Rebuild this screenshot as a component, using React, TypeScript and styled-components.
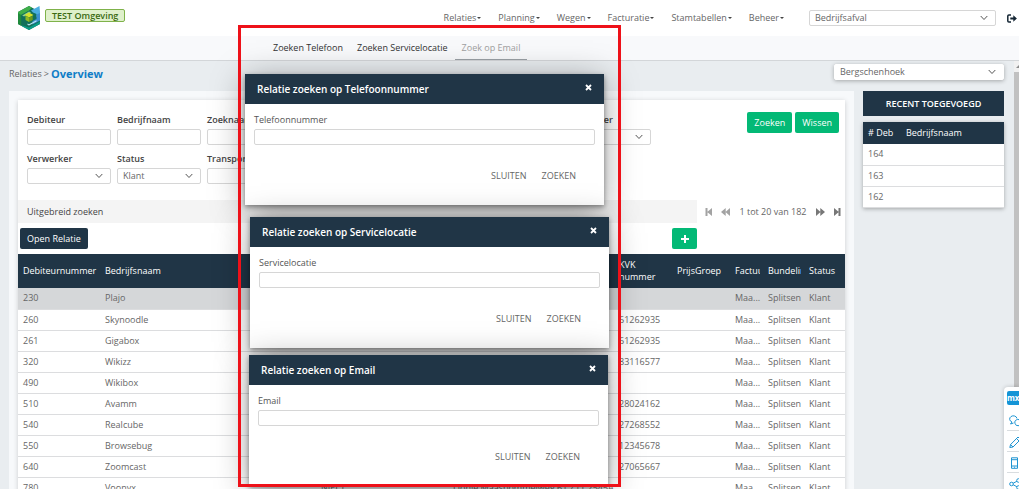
import React, { useId } from "react";
import styled, { createGlobalStyle } from "styled-components";

const navy = "#203546";
const green = "#03b976";
const line = "#dcdddf";

const GlobalStyle = createGlobalStyle`
  * { box-sizing: border-box; }
  body {
    margin: 0;
    overflow: hidden;
    background: #e9edf0;
    color: #666;
    font: 9px/12px "Open Sans", "Noto Sans", sans-serif;
  }
  button, input, select { font: inherit; color: inherit; margin: 0; }
  button { border: 0; padding: 0; background: none; cursor: pointer; }
  a { color: inherit; text-decoration: none; }
  svg { display: block; flex: none; }
`;

const Page = styled.div`
  position: relative;
  display: flex;
  flex-direction: column;
  height: 100vh;
  overflow: hidden;
`;

const TopBar = styled.header`
  display: flex;
  flex: none;
  align-items: center;
  height: 36px;
  padding: 0 2px 0 18px;
  background: #fff;
`;

const EnvBadge = styled.span`
  align-self: flex-start;
  margin: 9px 0 0 5px;
  padding: 0 6px;
  border: 1px solid #7fb24a;
  border-radius: 2px;
  background: #dff0cb;
  color: #3b6a12;
  font-weight: 600;
  line-height: 11px;
`;

const MainNav = styled.nav`
  display: flex;
  gap: 17px;
  margin: 0 25px 0 auto;
`;

const NavLink = styled.a`
  display: flex;
  align-items: center;
  gap: 1px;
  &::after {
    content: "";
    border: 2px solid transparent;
    border-top-color: #444;
    border-bottom: 0;
  }
`;

const IconButton = styled.button`
  display: grid;
  place-items: center;
  color: #555;
`;

const LogoutButton = styled(IconButton)`
  margin-left: 11px;
`;

const SubBar = styled.nav`
  display: flex;
  flex: none;
  height: 25px;
  padding-left: 266px;
  border-bottom: 1px solid #d3d6d9;
  background: #f8f9fb;
`;

const SubLink = styled.a<{ $active?: boolean }>`
  padding: 6px 7px 0;
  border-bottom: 1px solid ${(p) => (p.$active ? "#9aa0a6" : "transparent")};
  color: ${(p) => (p.$active ? "#a0a0a0" : "#333")};
`;

const Body = styled.div`
  display: flex;
  flex: 1;
  min-height: 0;
`;

const Main = styled.main`
  flex: 1;
  min-width: 0;
  padding: 3px 10px 0 9px;
`;

const Heading = styled.div`
  display: flex;
  justify-content: space-between;
  height: 27px;
`;

const Crumbs = styled.div`
  display: flex;
  align-items: center;
  gap: 2px;
  height: 20px;
`;

const Title = styled.h1`
  margin: 0;
  color: #0f7dc7;
  font-size: 11px;
  font-weight: 700;
`;

const SelectBox = styled.span<{ $width?: number; $raised?: boolean }>`
  display: grid;
  flex: none;
  align-items: center;
  width: ${(p) => (p.$width ? `${p.$width}px` : "100%")};
  height: 16px;
  border: 1px solid ${(p) => (p.$raised ? "#fff" : "#d6d6d6")};
  border-radius: 2px;
  background: #fff;
  box-shadow: ${(p) => (p.$raised ? "0 1px 4px rgba(0,0,0,.3)" : "none")};
  select {
    grid-area: 1 / 1;
    width: 100%;
    height: 14px;
    padding: 0 14px 0 5px;
    border: 0;
    background: none;
    appearance: none;
    line-height: 12px;
  }
  svg {
    grid-area: 1 / 1;
    justify-self: end;
    margin-right: 7px;
    pointer-events: none;
  }
`;

const Columns = styled.div`
  display: flex;
  gap: 9px;
`;

const Panel = styled.section`
  flex: 1;
  min-width: 0;
  padding: 9px 9px 0;
  background: #f7f9fb;
`;

const Card = styled.div`
  background: #fff;
  box-shadow: 0 1px 5px rgba(0, 0, 0, 0.18);
`;

const FilterArea = styled.form`
  display: flex;
  justify-content: space-between;
  height: 100px;
  padding: 14px 6px 0 9px;
`;

const FilterGrid = styled.div`
  display: grid;
  grid-template-columns: repeat(7, 84px);
  gap: 8px 6px;
  align-content: start;
`;

const Field = styled.div`
  display: flex;
  flex-direction: column;
  gap: 3px;
  label { color: #444; font-weight: 600; }
`;

const TextInput = styled.input`
  width: 100%;
  height: 16px;
  padding: 0 5px;
  border: 1px solid #d6d6d6;
  border-radius: 2px;
  background: #fff;
`;

const ButtonRow = styled.div`
  display: flex;
  align-items: flex-start;
  gap: 3px;
  margin-top: -2px;
`;

const Button = styled.button<{ $tone?: "navy" | "green" }>`
  display: grid;
  place-items: center;
  min-width: 25px;
  height: 21px;
  padding: 0 7px;
  border-radius: 2px;
  background: ${(p) => (p.$tone === "navy" ? navy : green)};
  color: #fff;
`;

const ExtraRow = styled.div`
  display: flex;
  height: 23px;
`;

const ExtraToggle = styled.button`
  flex: 1;
  padding: 0 9px;
  background: #f4f4f4;
  color: #444;
  text-align: left;
`;

const Pager = styled.div`
  display: flex;
  align-items: center;
  justify-content: space-between;
  width: 148px;
  padding: 0 4px 0 8px;
`;

const Actions = styled.div`
  display: flex;
  align-items: center;
  justify-content: space-between;
  height: 31px;
  padding: 0 148px 0 2px;
`;

const Table = styled.table`
  width: 100%;
  border-collapse: collapse;
  table-layout: fixed;
  th, td { padding: 0 3px 0 5px; text-align: left; white-space: nowrap; }
  th {
    height: 34px;
    background: ${navy};
    color: #fff;
    font-weight: 500;
  }
  td { height: 21px; border-bottom: 1px solid ${line}; }
`;

const Row = styled.tr<{ $selected?: boolean }>`
  background: ${(p) => (p.$selected ? "#d5d7d9" : "#fff")};
`;

const HeadText = styled.span`
  display: block;
  overflow: hidden;
  white-space: pre-line;
`;

const Side = styled.aside`
  width: 141px;
`;

const SideTitle = styled.h2`
  margin: 0 0 6px;
  background: ${navy};
  color: #fff;
  font-size: 9px;
  font-weight: 600;
  line-height: 25px;
  text-align: center;
`;

const RecentTable = styled(Table)`
  box-shadow: 0 1px 4px rgba(0, 0, 0, 0.3);
  th { height: 22px; }
  tr { background: #fff; }
`;

const ScrollTrack = styled.div`
  display: flex;
  flex-direction: column;
  width: 5px;
  overflow: hidden;
  background: #f1f1f1;
  &::before {
    content: "";
    width: 0;
    margin: 4px 0 4px 2px;
    border: 3px solid transparent;
    border-top: 0;
    border-bottom-color: #8a8a8a;
  }
  &::after { content: ""; flex: 1; background: #c1c1c1; }
`;

const Dialog = styled.section<{ $x: number; $y: number }>`
  position: absolute;
  left: ${(p) => p.$x}px;
  top: ${(p) => p.$y}px;
  width: 359px;
  background: #fff;
  box-shadow: 0 5px 32px rgba(0, 0, 0, 0.36), 0 2px 5px rgba(0, 0, 0, 0.4);
`;

const DialogHead = styled.header`
  display: flex;
  justify-content: space-between;
  height: 30px;
  padding: 9px 12px 0;
  background: ${navy};
  color: #fff;
  h2 { margin: 0; font-size: 10px; line-height: 12px; font-weight: 600; }
  button { height: 9px; color: #fff; }
`;

const DialogBody = styled.div`
  padding: 10px 9px 0;
  label { font-weight: 500; color: #555; }
`;

const DialogActions = styled.footer`
  display: flex;
  justify-content: flex-end;
  gap: 15px;
  padding: 25px 28px 23px;
`;

const Highlight = styled.div`
  position: absolute;
  left: 238px;
  top: 25px;
  width: 383px;
  height: 462px;
  border: 3px solid #ee1119;
  pointer-events: none;
`;

const Dock = styled.aside`
  position: absolute;
  right: 0;
  top: 387px;
  width: 15px;
  padding: 4px 0 0 3px;
  border-radius: 4px 0 0 4px;
  overflow: hidden;
  background: #fff;
  box-shadow: 0 0 4px rgba(0, 0, 0, 0.2);
`;

const DockLogo = styled.div`
  width: 18px;
  height: 14px;
  margin-bottom: 5px;
  border-radius: 2px;
  background: #1494d6;
  color: #fff;
  font-size: 8px;
  font-weight: 700;
  line-height: 13px;
`;

const DockItem = styled.button`
  display: block;
  width: 18px;
  height: 21px;
  padding: 3px 0 0 2px;
  border-bottom: 1px solid #d9dde0;
`;

const Chevron = () => (
  <svg width="8" height="6" viewBox="0 0 8 6" fill="none" stroke="#555">
    <path d="M.7 1 4 4.500 7.300 1" />
  </svg>
);

function Select({ label, id, value, width, raised }: { label?: string; id?: string; value?: string; width?: number; raised?: boolean }) {
  return (
    <SelectBox $width={width} $raised={raised}>
      <select id={id} aria-label={label}>
        <option>{value ?? ""}</option>
      </select>
      <Chevron />
    </SelectBox>
  );
}

function FilterField({ label, kind, value }: { label: string; kind?: "select"; value?: string }) {
  const id = useId();
  return (
    <Field>
      <label htmlFor={id}>{label}</label>
      {kind === "select" ? <Select id={id} value={value} /> : <TextInput id={id} />}
    </Field>
  );
}

const Logo = () => (
  <svg width="22" height="24" viewBox="0 0 22 24">
    <path d="M11 0 0 6v12l11 6 11-6V6z" fill="#12705a" />
    <path d="M11 0 0 6v2.500l2 1 9-5 3-2.800z" fill="#3fae49" />
    <path d="M0 7v11l3.200 1.800V9z" fill="#1f8a3c" />
    <path d="M4.200 9.500 11 5.500l2 1-7 4z" fill="#8fd08a" />
    <path d="M13 4.500 21.500 0 22 6v3l-3.500 2V8L15 6.500z" fill="#4aaee0" />
    <path d="M18.500 8.500 22 7v7.500l-7.500 4v-3.500l4-2z" fill="#3b8fd0" />
    <path d="M4.500 19.500 11 21.500l11-6V18l-11 6-7-3.800z" fill="#0a9c88" />
    <path d="m11 6.500 4.500 2.500-4.500 2.500L6.500 9z" fill="#d5e02c" />
    <path d="M7.500 9.700 11 11.500v4.400l-3.500-2z" fill="#8fb923" />
    <path d="M14.700 9.700v4.200L11 15.900v-4.400z" fill="#6a9a1e" />
    <path d="M9.500 17.500 11 18.300l7.500-4v1.200l-7.500 4-1.500-.8z" fill="#bfe6f2" />
  </svg>
);

const LogoutIcon = () => (
  <svg width="10" height="9" viewBox="0 0 10 9">
    <path d="M4 1H1.900Q.8 1 .8 2v5q0 1 1.100 1H4" fill="none" stroke="#152634" strokeWidth="1.500" />
    <path d="M3.300 3.400h3V1.300L9.900 4.500 6.300 7.700V5.600h-3z" fill="#152634" />
  </svg>
);

const CloseIcon = () => (
  <svg width="7" height="7" viewBox="0 0 7 7" stroke="#fff" strokeWidth="1.800">
    <path d="m1 1 5 5M6 1 1 6" />
  </svg>
);

const PlusIcon = () => (
  <svg width="8" height="8" viewBox="0 0 8 8" stroke="#fff" strokeWidth="2">
    <path d="M4 0v8M0 4h8" />
  </svg>
);

const StepIcon = ({ end, back }: { end?: boolean; back?: boolean }) => (
  <svg
    width={end ? 7 : 9}
    height="8"
    viewBox={end ? "0 0 7 8" : "0 0 9 8"}
    fill={back ? "#a3a3a3" : "#777"}
    transform={back ? "scale(-1 1)" : undefined}
  >
    {end ? <path d="M0 0 4.800 4 0 8zM4.500 0h2v8h-2z" /> : <path d="M0 0 4.500 4 0 8zM4.300 0 9 4 4.300 8z" />}
  </svg>
);

const DockIcon = ({ children }: { children: React.ReactNode }) => (
  <svg width="13" height="13" viewBox="0 0 13 13" fill="none" stroke="#1e94d2" strokeWidth="1">
    {children}
  </svg>
);

const columns: [string, number | undefined][] = [
  ["Debiteurnummer", 82],
  ["Bedrijfsnaam", undefined],
  ["Plaats", 132],
  ["Adres", 166],
  ["KVK\nnummer", 58],
  ["PrijsGroep", 58],
  ["Factuur", 33],
  ["Bundeling", 41],
  ["Status", 41],
];

const relations = [
  ["230", "Plajo", "", "", ""],
  ["260", "Skynoodle", "", "", "61262935"],
  ["261", "Gigabox", "", "", "61262935"],
  ["320", "Wikizz", "", "", "83116577"],
  ["490", "Wikibox", "", "", ""],
  ["510", "Avamm", "", "", "28024162"],
  ["540", "Realcube", "", "", "27268552"],
  ["550", "Browsebug", "", "", "12345678"],
  ["640", "Zoomcast", "", "", "27065667"],
  ["780", "Voonyx", "NIEL1", "Lionle Maasbommelweg 61 Z11 2545A", ""],
];

function SearchDialog({ subject, x, y }: { subject: string; x: number; y: number }) {
  const id = useId();
  return (
    <Dialog $x={x} $y={y} role="dialog" aria-labelledby={`${id}-title`}>
      <DialogHead>
        <h2 id={`${id}-title`}>Relatie zoeken op {subject}</h2>
        <IconButton aria-label="Sluiten"><CloseIcon /></IconButton>
      </DialogHead>
      <DialogBody>
        <Field>
          <label htmlFor={id}>{subject}</label>
          <TextInput id={id} />
        </Field>
      </DialogBody>
      <DialogActions>
        <button>SLUITEN</button>
        <button>ZOEKEN</button>
      </DialogActions>
    </Dialog>
  );
}

export default function App() {
  return (
    <Page>
      <GlobalStyle />
      <TopBar>
        <Logo />
        <EnvBadge>TEST Omgeving</EnvBadge>
        <MainNav>
          {["Relaties", "Planning", "Wegen", "Facturatie", "Stamtabellen", "Beheer"].map((item) => (
            <NavLink href="#" key={item}>{item}</NavLink>
          ))}
        </MainNav>
        <Select label="Afdeling" value="Bedrijfsafval" width={187} />
        <LogoutButton aria-label="Uitloggen"><LogoutIcon /></LogoutButton>
      </TopBar>
      <SubBar>
        <SubLink href="#">Zoeken Telefoon</SubLink>
        <SubLink href="#">Zoeken Servicelocatie</SubLink>
        <SubLink href="#" $active>Zoek op Email</SubLink>
      </SubBar>
      <Body>
        <Main>
          <Heading>
            <Crumbs>
              <a href="#">Relaties</a>
              <span>&gt;</span>
              <Title>Overview</Title>
            </Crumbs>
            <Select label="Vestiging" value="Bergschenhoek" width={170} raised />
          </Heading>
          <Columns>
            <Panel>
              <Card>
                <FilterArea>
                  <FilterGrid>
                    <FilterField label="Debiteur" />
                    <FilterField label="Bedrijfnaam" />
                    <FilterField label="Zoeknaam" />
                    <FilterField label="Plaats" />
                    <FilterField label="Adres" />
                    <FilterField label="Postcode" />
                    <FilterField label="Beheerder" kind="select" />
                    <FilterField label="Verwerker" kind="select" />
                    <FilterField label="Status" kind="select" value="Klant" />
                    <FilterField label="Transporteur" kind="select" />
                  </FilterGrid>
                  <ButtonRow>
                    <Button type="button">Zoeken</Button>
                    <Button type="button">Wissen</Button>
                  </ButtonRow>
                </FilterArea>
                <ExtraRow>
                  <ExtraToggle>Uitgebreid zoeken</ExtraToggle>
                  <Pager>
                    <IconButton aria-label="Eerste"><StepIcon end back /></IconButton>
                    <IconButton aria-label="Vorige"><StepIcon back /></IconButton>
                    <span>1 tot 20 van 182</span>
                    <IconButton aria-label="Volgende"><StepIcon /></IconButton>
                    <IconButton aria-label="Laatste"><StepIcon end /></IconButton>
                  </Pager>
                </ExtraRow>
                <Actions>
                  <Button $tone="navy">Open Relatie</Button>
                  <Button aria-label="Toevoegen"><PlusIcon /></Button>
                </Actions>
                <Table>
                  <colgroup>
                    {columns.map(([name, width]) => <col key={name} width={width} />)}
                  </colgroup>
                  <thead>
                    <tr>
                      {columns.map(([name]) => <th key={name}><HeadText>{name}</HeadText></th>)}
                    </tr>
                  </thead>
                  <tbody>
                    {relations.map((cells, i) => (
                      <Row key={cells[0]} $selected={i === 0}>
                        {cells.map((cell, j) => <td key={j}>{cell}</td>)}
                        <td />
                        <td>Maa...</td>
                        <td>Splitsen</td>
                        <td>Klant</td>
                      </Row>
                    ))}
                  </tbody>
                </Table>
              </Card>
            </Panel>
            <Side>
              <SideTitle>RECENT TOEGEVOEGD</SideTitle>
              <RecentTable>
                <colgroup><col width={38} /><col /></colgroup>
                <thead><tr><th># Deb</th><th>Bedrijfsnaam</th></tr></thead>
                <tbody>
                  {["164", "163", "162"].map((n) => <tr key={n}><td>{n}</td><td /></tr>)}
                </tbody>
              </RecentTable>
            </Side>
          </Columns>
        </Main>
        <ScrollTrack />
      </Body>
      <SearchDialog subject="Telefoonnummer" x={245} y={74} />
      <SearchDialog subject="Servicelocatie" x={250} y={217} />
      <SearchDialog subject="Email" x={249} y={355} />
      <Highlight />
      <Dock>
        <DockLogo>mx</DockLogo>
        <DockItem aria-label="Chat">
          <DockIcon><path d="M8 3.500A3.700 3.200 0 1 0 3 7L1.500 9l3-1M8.500 4.500a3.200 3 0 0 1 3 5l.5 2-2-.8A3.200 3 0 1 1 8.500 4.500" /></DockIcon>
        </DockItem>
        <DockItem aria-label="Notitie">
          <DockIcon><path d="m.8 11.500.8-3L9 1l2.500 2.500L4 11zM7.500 2.500 10 5M1.600 8.500 4 11" /></DockIcon>
        </DockItem>
        <DockItem aria-label="Mobiel">
          <DockIcon><path d="M2.500.8h6v10.500h-6zM2.500 2.700h6M2.500 9h6M5 10.200h1" /></DockIcon>
        </DockItem>
        <DockItem aria-label="Delen">
          <DockIcon><circle cx="2.500" cy="6" r="1.800" /><circle cx="9.500" cy="2.500" r="1.800" /><circle cx="9.500" cy="9.500" r="1.800" /><path d="m4.200 5.200 3.700-1.900M4.200 6.800l3.700 1.900" /></DockIcon>
        </DockItem>
      </Dock>
    </Page>
  );
}
